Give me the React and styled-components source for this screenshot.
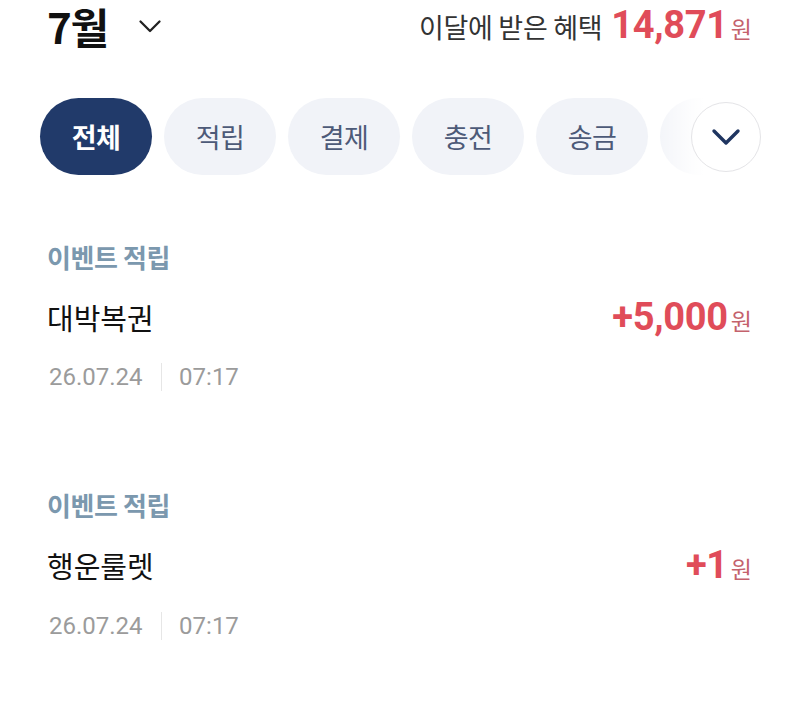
import React from "react";
import styled, { createGlobalStyle } from "styled-components";

const Global = createGlobalStyle`
  html, body { margin: 0; padding: 0; background: #ffffff; }
  body { font-family: "Noto Sans CJK KR", "Noto Sans", sans-serif; color: #111; }
  * { box-sizing: border-box; }
`;

const Page = styled.div`
  width: 800px;
  height: 703px;
  overflow: hidden;
  background: #fff;
`;

const Header = styled.div`
  display: flex;
  align-items: center;
  justify-content: space-between;
  height: 52px;
  padding: 0 48px 0 47px;
`;

const MonthButton = styled.div`
  display: flex;
  align-items: center;
  gap: 30px;
`;

const Month = styled.span`
  font-size: 42px;
  font-weight: 700;
  line-height: 1.24;
  letter-spacing: -1.2px;
  color: #111;
`;

const Benefit = styled.div`
  display: flex;
  align-items: baseline;
  gap: 9px;
`;

const BenefitLabel = styled.span`
  font-size: 27px;
  line-height: 1.3;
  color: #333;
  letter-spacing: -0.3px;
`;

const Amount = styled.span`
  font-family: Roboto, "Noto Sans", sans-serif;
  font-weight: 700;
  font-size: ${(p) => p.$size || 38}px;
  line-height: 1.3;
  color: #e04c59;
  letter-spacing: -0.3px;
`;

const Won = styled.span`
  font-size: 23px;
  line-height: 1.3;
  color: #c4626c;
  margin-left: 3px;
`;

const ChipBar = styled.div`
  position: relative;
  margin-top: 46px;
  height: 77px;
`;

const ChipTrack = styled.div`
  display: flex;
  gap: 12px;
  padding-left: 40px;
  overflow: hidden;
  height: 100%;
`;

const Chip = styled.div`
  flex: 0 0 112px;
  height: 77px;
  border-radius: 38.5px;
  display: flex;
  align-items: center;
  justify-content: center;
  font-size: 27px;
  font-weight: ${(p) => (p.$active ? 700 : 400)};
  background: ${(p) => (p.$active ? "#213a6a" : "#f1f3f8")};
  color: ${(p) => (p.$active ? "#ffffff" : "#4d5a78")};
  letter-spacing: -0.5px;
`;

const Fade = styled.div`
  position: absolute;
  top: 0;
  right: 0;
  width: 150px;
  height: 100%;
  display: flex;
  align-items: center;
  justify-content: flex-end;
  padding-right: 39px;
  background: linear-gradient(
    to right,
    rgba(255, 255, 255, 0) 0%,
    rgba(255, 255, 255, 0.85) 28%,
    #ffffff 36%
  );
`;

const MoreButton = styled.div`
  width: 70px;
  height: 70px;
  border-radius: 50%;
  border: 1.5px solid #e4e4e7;
  background: #fff;
  display: flex;
  align-items: center;
  justify-content: center;
`;

const List = styled.div`
  padding: 0 48px 0 47px;
  margin-top: 64px;
  display: flex;
  flex-direction: column;
  gap: 95px;
`;

const Item = styled.div`
  display: flex;
  flex-direction: column;
`;

const Category = styled.div`
  font-size: 26px;
  font-weight: 700;
  line-height: 36px;
  color: #7b98ae;
  letter-spacing: -0.4px;
`;

const TitleRow = styled.div`
  display: flex;
  align-items: baseline;
  justify-content: space-between;
  margin-top: 18px;
`;

const Title = styled.span`
  font-size: 29px;
  line-height: 42px;
  color: #111;
`;

const AmountWrap = styled.span`
  display: flex;
  align-items: baseline;
`;

const Meta = styled.div`
  display: flex;
  align-items: center;
  margin-top: 20px;
  font-family: Roboto, "Noto Sans", sans-serif;
  font-size: 24px;
  line-height: 30px;
  color: #9b9b9b;
  padding-left: 2px;
`;

const Divider = styled.span`
  width: 1.5px;
  height: 28px;
  background: #e6e6e6;
  margin: 0 17px 0 18px;
`;

const chips = ["전체", "적립", "결제", "충전", "송금", "교통"];

const items = [
  { cat: "이벤트 적립", title: "대박복권", amount: "+5,000", date: "26.07.24", time: "07:17" },
  { cat: "이벤트 적립", title: "행운룰렛", amount: "+1", date: "26.07.24", time: "07:17" },
];

export default function App() {
  return (
    <Page>
      <Global />
      <Header>
        <MonthButton>
          <Month>7월</Month>
          <svg width="24" height="14" viewBox="0 0 24 14" fill="none">
            <path d="M2.5 2.5l9.5 9.5 9.5-9.5" stroke="#222" strokeWidth="2.3" strokeLinecap="round" strokeLinejoin="round" />
          </svg>
        </MonthButton>
        <Benefit>
          <BenefitLabel>이달에 받은 혜택</BenefitLabel>
          <span>
            <Amount>14,871</Amount>
            <Won>원</Won>
          </span>
        </Benefit>
      </Header>

      <ChipBar>
        <ChipTrack>
          {chips.map((c, i) => (
            <Chip key={c} $active={i === 0}>
              {c}
            </Chip>
          ))}
        </ChipTrack>
        <Fade>
          <MoreButton>
            <svg width="30" height="18" viewBox="0 0 30 18" fill="none">
              <path d="M3 3l12 12 12-12" stroke="#1f3560" strokeWidth="3.4" strokeLinecap="round" strokeLinejoin="round" />
            </svg>
          </MoreButton>
        </Fade>
      </ChipBar>

      <List>
        {items.map((it, i) => (
          <Item key={i}>
            <Category>{it.cat}</Category>
            <TitleRow>
              <Title>{it.title}</Title>
              <AmountWrap>
                <Amount $size={38}>{it.amount}</Amount>
                <Won>원</Won>
              </AmountWrap>
            </TitleRow>
            <Meta>
              <span>{it.date}</span>
              <Divider />
              <span>{it.time}</span>
            </Meta>
          </Item>
        ))}
      </List>
    </Page>
  );
}
